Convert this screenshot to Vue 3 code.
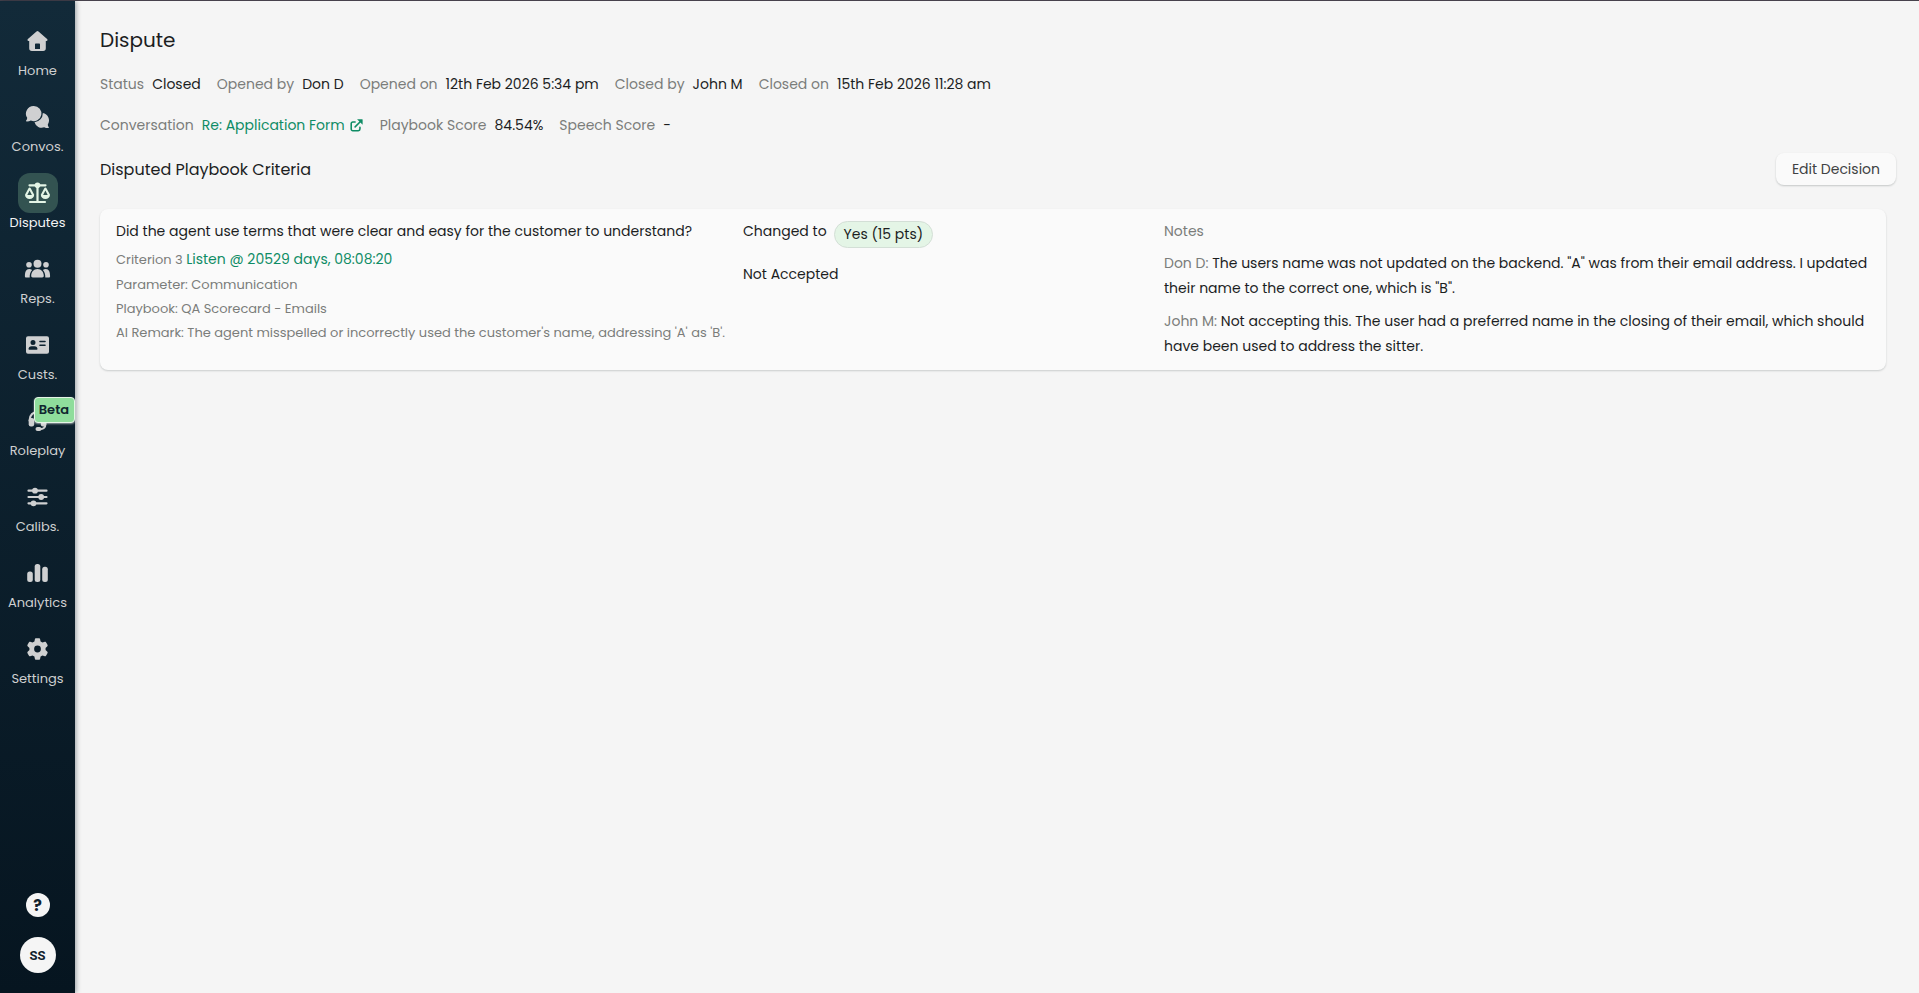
<script setup>
import { ref } from 'vue'

const activeItem = ref('disputes')

const navigation = [
  { id: 'home', label: 'Home' },
  { id: 'convos', label: 'Convos.' },
  { id: 'disputes', label: 'Disputes' },
  { id: 'reps', label: 'Reps.' },
  { id: 'custs', label: 'Custs.' },
  { id: 'roleplay', label: 'Roleplay', badge: 'Beta' },
  { id: 'calibs', label: 'Calibs.' },
  { id: 'analytics', label: 'Analytics' },
  { id: 'settings', label: 'Settings' }
]

const details = [
  { label: 'Status', value: 'Closed' },
  { label: 'Opened by', value: 'Don D' },
  { label: 'Opened on', value: '12th Feb 2026 5:34 pm' },
  { label: 'Closed by', value: 'John M' },
  { label: 'Closed on', value: '15th Feb 2026 11:28 am' }
]

const scores = [
  { label: 'Conversation', value: 'Re: Application Form', link: true },
  { label: 'Playbook Score', value: '84.54%' },
  { label: 'Speech Score', value: '-' }
]

const notes = [
  {
    author: 'Don D',
    text: 'The users name was not updated on the backend. "A" was from their email address. I updated their name to the correct one, which is "B".'
  },
  {
    author: 'John M',
    text: 'Not accepting this. The user had a preferred name in the closing of their email, which should have been used to address the sitter.'
  }
]
</script>

<template>
  <div class="layout">
    <aside class="sidebar">
      <nav class="nav">
        <a v-for="item in navigation"
           :key="item.id"
           :href="'#' + item.id"
           class="nav-item"
           :class="{ active: activeItem === item.id }"
           @click.prevent="activeItem = item.id">
          <span class="nav-icon">
            <svg v-if="item.id === 'home'" viewBox="0 0 26 26">
              <path fill-rule="evenodd" d="M12 3.4a1.5 1.5 0 0 1 2 0l8.6 7.6c.9.8.4 2-.7 2h-.6v7.3a2.7 2.7 0 0 1-2.7 2.7H7.4a2.7 2.7 0 0 1-2.7-2.7V13h-.6c-1.1 0-1.6-1.2-.7-2zM11.5 15.6c-.6 0-1 .4-1 1V21h5v-4.4c0-.6-.4-1-1-1z" />
            </svg>
            <svg v-else-if="item.id === 'convos'" viewBox="0 0 26 26">
              <path d="M9.3 2a7.6 7.6 0 1 1-2.9 14.6C5 17.3 3.3 17.5 2.1 17.4c-.6-.1-.7-.7-.3-1.1.6-.6.9-1.5.9-2.5A7.6 7.6 0 0 1 9.3 2z" />
              <path d="M18.3 9a7.5 7.5 0 0 1 5 11.5c0 1 .3 1.9.9 2.5.4.4.3 1-.3 1.1-1.2.1-2.9-.1-4.2-.8a7.5 7.5 0 0 1-9.7-5A9.2 9.2 0 0 0 18.3 9z" />
            </svg>
            <svg v-else-if="item.id === 'disputes'" viewBox="0 0 26 26">
              <circle cx="13" cy="5.2" r="2.8" />
              <path class="stroke" d="M5 5.3h16M13 5v17M5.5 22h15" />
              <path fill-rule="evenodd" d="M4 8.3c.5-1 1.7-1 2.2 0L9.7 14.8c0 2.5-2 4.2-4.6 4.2S.5 17.3.5 14.8zM5.1 10.5 2.8 15h4.6z" />
              <path fill-rule="evenodd" d="M19.8 8.3c.5-1 1.7-1 2.2 0l3.5 6.5c0 2.5-2 4.2-4.6 4.2s-4.6-1.7-4.6-4.2zM20.9 10.5 18.6 15h4.6z" />
            </svg>
            <svg v-else-if="item.id === 'reps'" viewBox="0 0 26 26">
              <circle cx="13" cy="7.7" r="4" />
              <circle cx="4.5" cy="8.8" r="2.8" />
              <circle cx="21.5" cy="8.8" r="2.8" />
              <path d="M13 13c3.8 0 6.3 3 6.3 6.8 0 1.1-.6 1.7-1.6 1.7H8.3c-1 0-1.6-.6-1.6-1.7C6.7 16 9.2 13 13 13z" />
              <path d="M4.6 13c1.2 0 2.2.3 3 .9-1.7 1.6-2.5 4.2-2.4 7.6H1.7c-.8 0-1.3-.5-1.3-1.3C.4 16 1.6 13 4.6 13zM21.4 13c-1.2 0-2.2.3-3 .9 1.7 1.6 2.5 4.2 2.4 7.6h3.5c.8 0 1.3-.5 1.3-1.3 0-4.2-1.2-7.2-4.2-7.2z" />
            </svg>
            <svg v-else-if="item.id === 'custs'" viewBox="0 0 26 26">
              <path fill-rule="evenodd" d="M3.5 4.3h19a2 2 0 0 1 2 2v13.4a2 2 0 0 1-2 2h-19a2 2 0 0 1-2-2V6.3a2 2 0 0 1 2-2zM8.5 7.9a2.5 2.5 0 1 0 0 5 2.5 2.5 0 0 0 0-5zM7 14.2c-1.8 0-3 1.2-3 2.8 0 .4.3.7.7.7h7.6c.4 0 .7-.3.7-.7 0-1.6-1.2-2.8-3-2.8zM15.5 8.7a.8.8 0 0 0 0 1.6h5a.8.8 0 0 0 0-1.6zM15.5 12.5a.8.8 0 0 0 0 1.6h5a.8.8 0 0 0 0-1.6z" />
            </svg>
            <svg v-else-if="item.id === 'roleplay'" viewBox="0 0 26 26">
              <path class="stroke" d="M5.3 13v-1.5a7.7 7.7 0 0 1 15.4 0V17a4 4 0 0 1-4 4H14" />
              <rect x="4.2" y="10" width="5.5" height="8.5" rx="2.2" />
              <rect x="16.3" y="10" width="5.5" height="8.5" rx="2.2" />
              <rect x="11" y="19" width="6" height="4" rx="2" />
            </svg>
            <svg v-else-if="item.id === 'calibs'" viewBox="0 0 26 26">
              <path class="stroke" d="M4 6.7h18M4 13h18M4 19.3h18" />
              <circle cx="10.5" cy="6.7" r="2.9" />
              <circle cx="16.7" cy="13" r="2.9" />
              <circle cx="9" cy="19.3" r="2.9" />
            </svg>
            <svg v-else-if="item.id === 'analytics'" viewBox="0 0 26 26">
              <rect x="2.7" y="11.5" width="5.6" height="10.5" rx="2.5" />
              <rect x="10.2" y="4" width="5.6" height="18" rx="2.5" />
              <rect x="17.7" y="6.8" width="5.6" height="15.2" rx="2.5" />
            </svg>
            <svg v-else viewBox="-52 -52 616 616">
              <path d="M495.9 166.6c3.2 8.7.5 18.4-6.4 24.6l-43.3 39.4c1.1 8.3 1.7 16.8 1.7 25.4s-.6 17.1-1.7 25.4l43.3 39.4c6.9 6.2 9.6 15.9 6.4 24.6-4.4 11.9-9.7 23.3-15.8 34.3l-4.7 8.1c-6.6 11-14 21.4-22.1 31.2-5.9 7.2-15.7 9.6-24.5 6.8l-55.7-17.7c-13.4 10.3-28.2 18.9-44 25.4l-12.5 57.1c-2 9.1-9 16.3-18.2 17.8-13.8 2.3-28 3.5-42.5 3.5s-28.7-1.2-42.5-3.5c-9.2-1.5-16.2-8.7-18.2-17.8l-12.5-57.1c-15.8-6.5-30.6-15.1-44-25.4l-55.6 17.8c-8.8 2.8-18.6.3-24.5-6.8-8.1-9.8-15.5-20.2-22.1-31.2l-4.7-8.1c-6.1-11-11.4-22.4-15.8-34.3-3.2-8.7-.5-18.4 6.4-24.6l43.3-39.4C64.6 273.1 64 264.6 64 256s.6-17.1 1.7-25.4l-43.3-39.4c-6.9-6.2-9.6-15.9-6.4-24.6 4.4-11.9 9.7-23.3 15.8-34.3l4.7-8.1c6.6-11 14-21.4 22.1-31.2 5.9-7.2 15.7-9.6 24.5-6.8l55.7 17.7c13.4-10.3 28.2-18.9 44-25.4l12.5-57.1c2-9.1 9-16.3 18.2-17.8C227.3 1.2 241.5 0 256 0s28.7 1.2 42.5 3.5c9.2 1.5 16.2 8.7 18.2 17.8l12.5 57.1c15.8 6.5 30.6 15.1 44 25.4l55.7-17.7c8.8-2.8 18.6-.3 24.5 6.8 8.1 9.8 15.5 20.2 22.1 31.2l4.7 8.1c6.1 11 11.4 22.4 15.8 34.3zM256 336a80 80 0 1 0 0-160 80 80 0 1 0 0 160z" />
            </svg>
          </span>
          <span class="nav-label">{{ item.label }}</span>
          <span v-if="item.badge" class="nav-badge">{{ item.badge }}</span>
        </a>
      </nav>
      <div class="sidebar-footer">
        <button class="help" type="button" aria-label="Help">?</button>
        <button class="avatar" type="button" aria-label="Account">SS</button>
      </div>
    </aside>

    <main class="content">
      <h1>Dispute</h1>

      <div class="summary">
        <dl class="fields">
          <div v-for="field in details" :key="field.label" class="field">
            <dt>{{ field.label }}</dt>
            <dd>{{ field.value }}</dd>
          </div>
        </dl>

        <dl class="fields">
          <div v-for="field in scores" :key="field.label" class="field">
            <dt>{{ field.label }}</dt>
            <dd>
              <a v-if="field.link" class="conversation" href="#conversation">
                {{ field.value }}
                <svg viewBox="0 0 14 14">
                  <path class="thin" d="M5.5 3.2H3A1.7 1.7 0 0 0 1.3 4.9v6A1.7 1.7 0 0 0 3 12.6h6a1.7 1.7 0 0 0 1.7-1.7V8.8M5.5 8.5l5.5-5.5" />
                  <path d="M7.600.3h5.500a.5.5 0 0 1 .5.500v5.500z" />
                </svg>
              </a>
              <template v-else>{{ field.value }}</template>
            </dd>
          </div>
        </dl>
      </div>

      <div class="section-header">
        <h2>Disputed Playbook Criteria</h2>
        <button class="edit" type="button">Edit Decision</button>
      </div>

      <section class="card">
        <div class="criterion">
          <h3>Did the agent use terms that were clear and easy for the customer to understand?</h3>
          <p class="listen">Criterion 3 <a href="#listen">Listen @ 20529 days, 08:08:20</a></p>
          <p>Parameter: Communication</p>
          <p>Playbook: QA Scorecard - Emails</p>
          <p>AI Remark: The agent misspelled or incorrectly used the customer's name, addressing 'A' as 'B'.</p>
        </div>

        <div class="decision">
          <div class="change">
            <span>Changed to</span>
            <span class="answer">Yes (15 pts)</span>
          </div>
          <p>Not Accepted</p>
        </div>

        <div class="notes">
          <h4>Notes</h4>
          <p v-for="note in notes" :key="note.author">
            <span class="author">{{ note.author }}:</span> {{ note.text }}
          </p>
        </div>
      </section>
    </main>
  </div>
</template>

<style>
body {
  margin: 0;
  background: #f5f5f5;
}
</style>

<style scoped>
* {
  box-sizing: border-box;
}

.layout {
  display: flex;
  min-height: 100vh;
  border-top: 1px solid #47424c;
  background: #f5f5f5;
  color: #1c1e1f;
  font-family: Poppins, Inter, sans-serif;
  font-size: 14px;
  line-height: 25px;
}

h1, h2, h3, h4, p, dl, dd {
  margin: 0;
  font-weight: 400;
}

a {
  color: #0f8c65;
  text-decoration: none;
}

button {
  font-family: inherit;
  cursor: pointer;
}

/* Sidebar */
.sidebar {
  display: flex;
  flex-direction: column;
  justify-content: space-between;
  flex-shrink: 0;
  width: 75px;
  padding: 20px 0;
  background: linear-gradient(180deg, #122a39, #061520);
  box-shadow: 1px 0 5px rgba(6, 21, 32, 0.4);
}

.nav {
  display: flex;
  flex-direction: column;
  gap: 16px;
}

.nav-item {
  position: relative;
  display: flex;
  flex-direction: column;
  align-items: center;
  color: #cfd0d1;
  font-size: 13px;
  line-height: 20px;
}

.nav-icon {
  display: flex;
  align-items: center;
  justify-content: center;
  width: 40px;
  height: 40px;
  border-radius: 12px;
}

.nav-icon svg {
  width: 27px;
  height: 26px;
  fill: currentColor;
}

.nav-icon .stroke {
  fill: none;
  stroke: currentColor;
  stroke-width: 2.2;
  stroke-linecap: round;
}

.nav-item.active {
  color: #f4f4f4;
}

.nav-item.active .nav-icon {
  background: #335351;
  color: #e4f5e6;
}

.nav-badge {
  position: absolute;
  top: -4px;
  right: 0;
  padding: 2px 5px 2px 4px;
  border: 1px solid #e4f5e6;
  border-radius: 4px;
  background: #8fdd9c;
  box-shadow: 0 1px 2px rgba(244, 244, 244, 0.6);
  color: #10252f;
  font-weight: 600;
}

.sidebar-footer {
  display: flex;
  flex-direction: column;
  align-items: center;
  gap: 20px;
}

.help,
.avatar {
  padding: 0;
  border: 0;
  border-radius: 50%;
  background: #f5f5f5;
  color: #10202c;
  font-weight: 700;
}

.help {
  width: 24px;
  height: 24px;
  font-size: 16px;
}

.avatar {
  width: 36px;
  height: 36px;
  font-family: Roboto, sans-serif;
  font-size: 13px;
}

/* Page content */
.content {
  flex: 1;
  min-width: 0;
  padding: 24px 23px 24px 25px;
}

h1 {
  margin-bottom: 17px;
  font-size: 20px;
  line-height: 30px;
}

.summary {
  display: flex;
  flex-direction: column;
  gap: 17px;
  margin-bottom: 16px;
  line-height: 24px;
}

.fields {
  display: flex;
  flex-wrap: wrap;
  gap: 16px;
}

.field {
  display: flex;
  gap: 8px;
}

dt,
h4,
.author {
  color: #7b7d7b;
}

.conversation {
  display: flex;
  align-items: center;
  gap: 5px;
}

.conversation svg {
  width: 13px;
  height: 13px;
  margin-right: 1px;
  fill: currentColor;
}

.conversation .thin {
  fill: none;
  stroke: currentColor;
  stroke-width: 1.7;
  stroke-linecap: round;
}

.section-header {
  display: flex;
  align-items: center;
  justify-content: space-between;
  margin-bottom: 24px;
}

h2 {
  font-size: 16px;
}

.edit {
  height: 32px;
  padding: 0 16px;
  border: 0;
  border-radius: 8px;
  background: #fafafa;
  box-shadow: 0 1px 2px rgba(0, 20, 20, 0.2);
  color: #404243;
  font-size: 14px;
}

.card {
  display: grid;
  grid-template-columns: 627fr 421fr 706fr;
  margin-right: 10px;
  padding: 10px 16px 11px;
  border-radius: 8px;
  background: #fafafa;
  box-shadow: 0 1px 2px rgba(0, 20, 20, 0.18);
}

h3,
h4 {
  font-size: 14px;
}

h3 {
  margin-bottom: 2px;
}

.criterion p {
  color: #7b7d7b;
  font-size: 13px;
  line-height: 24px;
}

.criterion .listen {
  line-height: 26px;
}

.criterion a {
  font-size: 14px;
}

.change {
  display: flex;
  gap: 7px;
  margin-bottom: 14px;
}

.answer {
  margin-top: 2px;
  padding: 0 9px;
  border: 1px solid #d3dfd6;
  border-radius: 14px;
  background: #e4f5e6;
}

h4 {
  margin-bottom: 7px;
}

.notes p + p {
  margin-top: 8px;
}
</style>
